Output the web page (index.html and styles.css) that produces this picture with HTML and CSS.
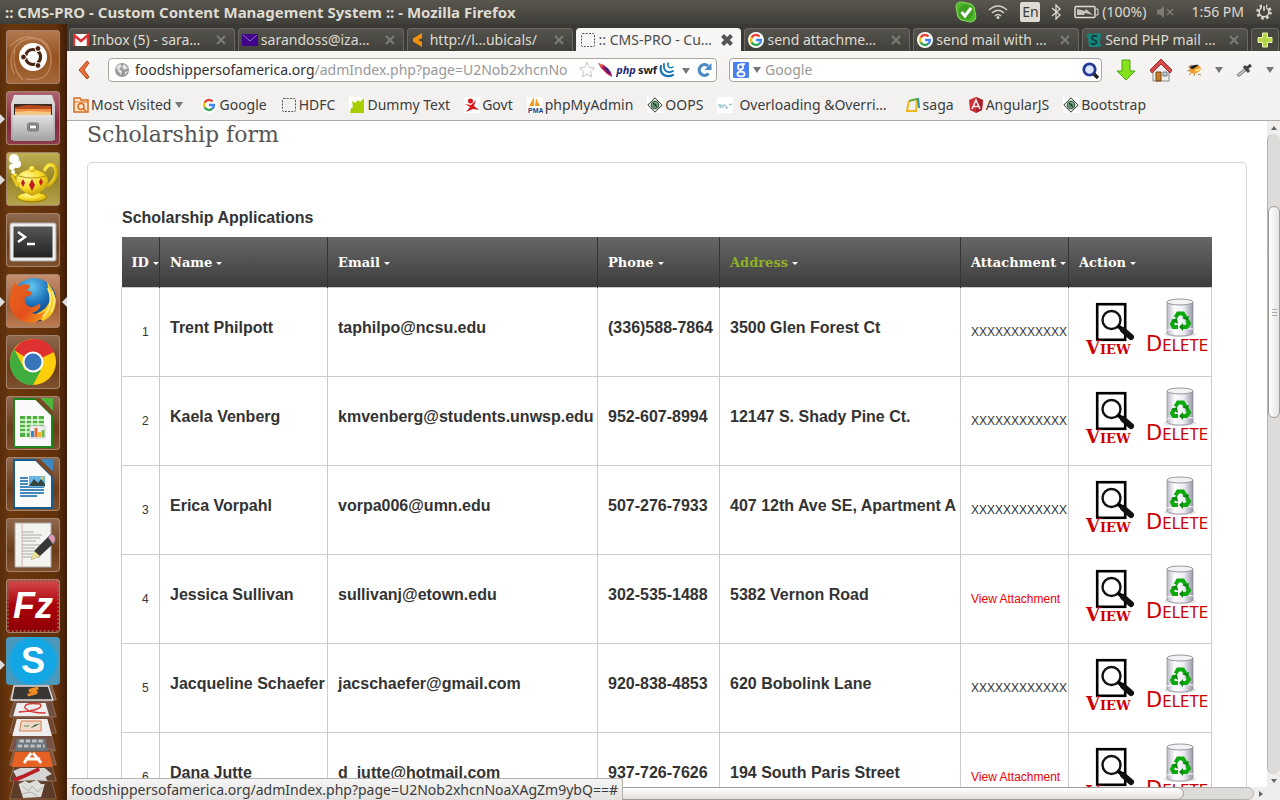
FILE: index.html
```html
<!DOCTYPE html>
<html lang="en">
<head>
<meta charset="utf-8">
<title>:: CMS-PRO - Custom Content Management System ::</title>
<link rel="stylesheet" href="styles.css">
</head>
<body>
<svg class="defs" aria-hidden="true">
  <defs>
    <linearGradient id="glass" x1="0" x2="1" y1="0" y2="0"><stop offset="0" stop-color="#b9b8c6"/><stop offset=".3" stop-color="#fff"/><stop offset=".65" stop-color="#ececf3"/><stop offset="1" stop-color="#9998a8"/></linearGradient>
    <linearGradient id="steel" x1="0" x2="0" y1="0" y2="1"><stop offset="0" stop-color="#e2e2e2"/><stop offset="1" stop-color="#a2a2a2"/></linearGradient>
    <linearGradient id="dark" x1="0" x2="0" y1="0" y2="1"><stop offset="0" stop-color="#565656"/><stop offset="1" stop-color="#222"/></linearGradient>
    <radialGradient id="gold" cx=".4" cy=".3" r=".8"><stop offset="0" stop-color="#fff9a0"/><stop offset=".5" stop-color="#f7dc25"/><stop offset="1" stop-color="#b98b00"/></radialGradient>
    <radialGradient id="globe" cx=".45" cy=".2" r=".8"><stop offset="0" stop-color="#63c5f0"/><stop offset=".5" stop-color="#1b6fb8"/><stop offset="1" stop-color="#0b2a66"/></radialGradient>
    <linearGradient id="fox" x1="0" x2="1" y1="0" y2="1"><stop offset="0" stop-color="#e8641b"/><stop offset=".6" stop-color="#e4501c"/><stop offset="1" stop-color="#f9a11b"/></linearGradient>
  </defs>
  <symbol id="i-google" viewBox="0 0 16 16"><circle cx="8" cy="8" r="8" fill="#fff"/><g fill="none" stroke-width="2.4"><path d="M3.6 5.6A5 5 0 0 1 11.6 4.5" stroke="#ea4335"/><path d="M3.6 10.4a5 5 0 0 1 0-4.8" stroke="#fbbc05"/><path d="M3.6 10.4A5 5 0 0 0 11.3 11.7" stroke="#34a853"/><path d="M8 8h5a5 5 0 0 1-1.7 3.7" stroke="#4285f4"/></g></symbol>
  <symbol id="i-dashed" viewBox="0 0 16 16"><rect x="1.5" y="1.5" width="13" height="13" rx="1" fill="none" stroke="#555" stroke-dasharray="2 1.25"/></symbol>
  <symbol id="i-x" viewBox="0 0 12 12"><path d="M2 2l8 8M10 2l-8 8" stroke="currentColor" stroke-width="2"/></symbol>
  <symbol id="i-diamond" viewBox="0 0 16 16"><path fill="#fff" d="M0 0h16v16H0z"/><path d="M8 .8L15.2 8 8 15.2.8 8z" fill="#e8f0e8" stroke="#333"/><circle cx="8" cy="8" r="3.6" fill="#8cb395" stroke="#345c40" stroke-width="1.3"/><path d="M6 8h4M8 6v4M6 6l4 4" stroke="#1e3d28"/></symbol>
  <symbol id="i-view" viewBox="0 0 40 40"><rect x="2.2" y="2.2" width="28" height="35.600" fill="#fff" stroke="#000" stroke-width="2.600"/><circle cx="16.500" cy="18" r="9" fill="#fff" stroke="#111" stroke-width="2.400"/><path d="M23 24l5 4" stroke="#000" stroke-width="4"/><path d="M28 28l8 7" stroke="#111" stroke-width="6" stroke-linecap="round"/></symbol>
  <symbol id="i-bin" viewBox="0 0 32 40"><ellipse cx="16" cy="36" rx="16" ry="3" fill="#ccc" opacity=".6"/><path d="M3 4v31c1 4 25 4 26 0V4z" fill="url(#glass)" stroke="#888794" stroke-width=".7"/><ellipse cx="16" cy="4" rx="13" ry="3" fill="#f3f3f7" stroke="#999"/><path d="M3 32q12-3 26-1" fill="none" stroke="#fff"/><g fill="none" stroke="#0ca90c" stroke-width="4"><path d="M11.500 19.500l2.500-4h5l2.500 4"/><path d="M23 22l2 3.500-2.500 3.500h-4.500"/><path d="M14 29h-4.500l-1.500-3 2.500-4"/></g><g fill="#078a0a"><path d="M18 20l7-2-1 5z"/><path d="M19 25v8l-4-4z"/><path d="M7 22l6-2 1 6z"/></g></symbol>
</svg>

<header class="panel">
  <h1 class="panel-title">:: CMS-PRO - Custom Content Management System :: - Mozilla Firefox</h1>
  <div class="indicators">
    <svg width="22" height="22" viewBox="0 0 22 22"><path d="M1 6q0-5 5-5 3 0 5 1 9 0 9 9 3 9-4 10-3 0-5-1-9 0-9-9z" fill="#52b62d" stroke="#83d95f"/><circle cx="11" cy="11" r="7.500" fill="#3e9f20"/><path d="M6.500 11l3.500 4 6-8" fill="none" stroke="#fff" stroke-width="3"/></svg>
    <svg class="wifi" width="20" height="16" viewBox="0 0 20 16"><g fill="none" stroke="#d6d2c8" stroke-width="1.600"><path d="M1 6q9-8 18 0M4 9q6-5.500 12 0M7 12q3-3 6 0"/></g><circle cx="10" cy="13.500" r="1.500" fill="#d6d2c8"/></svg>
    <span class="lang">En</span>
    <svg class="bt" width="10" height="16" viewBox="0 0 10 16"><path d="M1 4l8 7-4 4V1l4 4-8 7" fill="none" stroke="#dfdbd2" stroke-width="1.300"/></svg>
    <svg width="25" height="14" viewBox="0 0 25 14"><rect x="1" y="1.500" width="20" height="11" rx="1" fill="none" stroke="#dfdbd2" stroke-width="1.500"/><path d="M22 4h2v6h-2" fill="none" stroke="#dfdbd2"/><path d="M3 4l8 2 1-2 7 6-8-2-1 2H3z" fill="#c9c5bb"/></svg>
    <span class="battery">(100%)</span>
    <svg class="mute" width="18" height="14" viewBox="0 0 18 14"><path d="M1 4.500h3l4-3.500v12L4 9.500H1z" fill="#7d7a72"/><path d="M11 4l6 6M17 4l-6 6" stroke="#7d7a72" stroke-width="1.500"/></svg>
    <time class="clock">1:56 PM</time>
    <svg width="16" height="16" viewBox="0 0 16 16"><circle cx="8" cy="8" r="6.500" fill="none" stroke="#dfdbd2" stroke-width="2.500" stroke-dasharray="2.500 2.600"/><circle cx="8" cy="8" r="4.800" fill="#48463f" stroke="#dfdbd2" stroke-width="1.500"/><path d="M8 0v7" stroke="#48463f" stroke-width="4"/><path d="M8 2v5" stroke="#dfdbd2" stroke-width="1.600"/></svg>
  </div>
</header>

<div class="desktop">
  <nav class="launcher" aria-label="Launcher">
    <button class="tile dash" aria-label="Dash home"><svg viewBox="0 0 54 54"><g fill="none" stroke="#e2b48b" stroke-width="1.500" opacity=".45"><path d="M4 16Q22-1 39 14q10 12 4 26M8 44Q0 24 14 12q15-8 26 2M17 50q-12-12-8-30M20 49q24 4 25-18 0-18-12-22"/></g><circle cx="27" cy="27" r="14" fill="#fff"/><circle cx="27" cy="27" r="7.500" fill="none" stroke="#4a2410" stroke-width="3.200" stroke-dasharray="13.500 2.200" stroke-dashoffset="-9"/><g fill="#4a2410" stroke="#fff"><circle cx="17.500" cy="27" r="2.900"/><circle cx="32" cy="18.500" r="2.900"/><circle cx="32" cy="35.500" r="2.900"/></g></svg></button>
    <button class="tile files open" aria-label="Files"><svg viewBox="0 0 54 54"><path d="M8 4h38l3 9v36H5V13z" fill="url(#steel)"/><path d="M8 13h38v12H8z" fill="#3a2b20"/><path d="M9 16l12-2 24 1v9H9z" fill="#b64a1d"/><path d="M9 18h36v6H9z" fill="#ee8d43"/><path d="M9 21l14-1 22 1v4H9z" fill="#f6c888"/><path d="M7 24h40v26H7z" fill="url(#steel)"/><rect x="21.500" y="32" width="11" height="8" rx="1.500" fill="#999" stroke="#777"/><rect x="23.500" y="34" width="7" height="4" fill="#fff" stroke="#666"/></svg></button>
    <button class="tile teapot open" aria-label="Teapot"><svg viewBox="0 0 54 54"><path d="M38 19q4-9 10-5 7 9-7 21" fill="none" stroke="url(#gold)" stroke-width="3.500"/><ellipse cx="26" cy="45" rx="15" ry="5" fill="url(#gold)" stroke="#9c7b05"/><path d="M11 22Q7 36 26 44q17-6 16-17-2-8-16-10-10 1-15 8-4-1-5-5z" fill="url(#gold)"/><path d="M13 24q12 4 27 0" stroke="#b79313" fill="none"/><circle cx="26" cy="17" r="3" fill="url(#gold)"/><path d="M6 23l5 10 3-2" fill="none" stroke="#e5c61a" stroke-width="3"/><g fill="#c11b25"><path d="M26 27l3 6-3 6-3-6zM17 27l2 4-2 4-2-4zM35 26l2 4-2 4-2-4z"/></g><g fill="#fff"><circle cx="8" cy="7" r="5"/><circle cx="11" cy="12" r="4"/><circle cx="6" cy="15" r="3"/><circle cx="7" cy="20" r="2"/></g></svg></button>
    <button class="tile" aria-label="Terminal"><svg viewBox="0 0 54 54"><rect x="4" y="10" width="46" height="38" rx="2" fill="#eee" stroke="#aaa"/><rect x="7.500" y="13.500" width="39" height="31" fill="url(#dark)"/><path d="M12 19l7 5-7 5M21 31h8" fill="none" stroke="#fff" stroke-width="2.500"/></svg></button>
    <button class="tile firefox open focus" aria-label="Firefox"><svg viewBox="0 0 54 54"><circle cx="28" cy="26" r="22" fill="url(#globe)"/><path d="M41 7l5 8 4 10q0 16-13 22l-10-6q17-6 17-18-2-7-3-16z" fill="#f8c722"/><path d="M7 12l2-4 3 4q6-3 12-1 0 4-4 5l6 2-2 4-5 1q-2 7 5 10 6 0 10-4 2 7-8 10 7 3 13-2-1 9-12 12Q7 48 4 31q-1-8 3-19z" fill="url(#fox)"/><path d="M42 14q7 16-5 29M46 17q5 12-1 21" fill="none" stroke="#ffe877" stroke-width="2"/></svg></button>
    <button class="tile" aria-label="Chrome"><svg viewBox="0 0 54 54"><circle cx="27" cy="27" r="23" fill="#ffce0b"/><path d="M27 27L8 15Q15 4 27 4q15 0 21 13z" fill="#df3131"/><path d="M8 14Q-1 31 10 43q8 8 17 7l8-15-16 0z" fill="#3fae3e"/><circle cx="27" cy="27" r="10.500" fill="#fff"/><circle cx="27" cy="27" r="8.500" fill="#3975bd"/></svg></button>
    <button class="tile" aria-label="Calc"><svg viewBox="0 0 54 54"><path d="M8 3h22l16 16v32H8z" fill="#fafafa" stroke="#1d831b" stroke-width="2"/><path d="M34 2h13v13z" fill="#4bb53c"/><path d="M29 3l18 17v-5L34 2z" fill="#7b4624"/><path d="M14 20h24v21H14z" fill="#53ad45"/><path d="M14 24h24M14 28h24M14 32h24M14 36h24M20 20v21M26 20v21M32 20v21" stroke="#e4ffdc" stroke-width="1.500"/><path d="M24 30h15v12H24z" fill="#f1f1f1" stroke="#ccc"/><path d="M25 35h3v6h-3z" fill="#3289d2"/><path d="M28.500 32h3v9h-3z" fill="#e46a38"/><path d="M32 36h3v5h-3z" fill="#efb830"/><path d="M35.500 34h3v7h-3z" fill="#73bc52"/></svg></button>
    <button class="tile" aria-label="Writer"><svg viewBox="0 0 54 54"><path d="M8 3h22l16 16v32H8z" fill="#fafafa" stroke="#175c91" stroke-width="2"/><path d="M34 2h13v13z" fill="#3d88c0"/><path d="M29 3l18 17v-5L34 2z" fill="#7b4624"/><path d="M14 21h8M14 24h8M14 27h8M14 30h24M14 33h24M14 36h24M14 39h17" stroke="#4389be" stroke-width="2"/><path d="M23 19h16v11H23z" fill="#6ab6e5"/><path d="M23 29l5-7 4 4 3-4 4 5v2z" fill="#34463e"/><circle cx="36" cy="21" r="1.500" fill="#f5d440"/></svg></button>
    <button class="tile" aria-label="Text editor"><svg viewBox="0 0 54 54"><path d="M9 5h36v44H9z" fill="#f3f3f0" stroke="#aaa"/><path d="M16 5v44" stroke="#eaa"/><path d="M16 14h12M16 17h20M16 20h18M16 23h14M16 27h20M16 30h13M16 33h17M16 36h12M16 39h18" stroke="#aaa"/><path d="M25 42l4-10L42 19l6 6-14 13z" fill="#363636"/><path d="M25 42l3-9 6 5z" fill="#eee191"/><path d="M42 19l3-3q5 1 4 7l-2 3z" fill="#e698b9" stroke="#777"/></svg></button>
    <button class="tile filezilla" aria-label="FileZilla"><span>Fz</span></button>
    <button class="skype open" aria-label="Skype"><span>S</span></button>
    <button class="folded" aria-label="More applications"><svg viewBox="0 0 60 115" preserveAspectRatio="none"><g stroke="#a88774" stroke-opacity=".6"><path d="M9 0h42l5 15H4z" fill="#84604b"/><path d="M9 16h42l5 16H4z" fill="#705040"/><path d="M9 32h42l5 16H4z" fill="#70462f"/><path d="M10 48h40l5 18H4z" fill="#755246"/><path d="M9 64h42l5 16H4z" fill="#80573e"/><path d="M9 80h42l5 16H4z" fill="#63422f"/><path d="M9 96h42l5 18H4z" fill="#5c3b28"/></g><path d="M9 1h38l5 14H6z" fill="#393735" stroke="#ddd" stroke-width="1.500"/><path d="M36 3l-9 2q-2 2 5 1 6 2-8 4" fill="none" stroke="#f08b22" stroke-width="3"/><path d="M12 18h32l4 13H8z" fill="#eee"/><path d="M14 27q29-2 24-8-18-2-17 4 5 5 23 5" fill="none" stroke="#d53a3c" stroke-width="1.500"/><path d="M12 34h34l5 17H7z" fill="#eee"/><path d="M17 36h22v10H15z" fill="#efd9cd" stroke="#dc7540"/><path d="M20 41h6M28 43l4-3 5-1" stroke="#4b9a48"/><path d="M12 54h32l2 12H10z" fill="#6e7479"/><path d="M15 56h26M13 61h30" stroke="#bbc0c4" stroke-width="3" stroke-dasharray="5 2"/><path d="M10 67h38l4 15H6z" fill="#e66224"/><path d="M28 68l-8 10M30 68l9 10M21 74h17" stroke="#fff" stroke-width="3"/><path d="M8 86l8-3h27l8 6-7 3 2 4-14-1-18 1z" fill="#d5d5d5"/><path d="M9 95l9-3 19-8" stroke="#b91f24" stroke-width="4" fill="none"/><path d="M14 99l7-3 5 2 8-3 5 4 4 0-4 13-20 1z" fill="#dededb"/><path d="M18 101l7 5 4-5 6 6 6-5M18 109l9-2 8 4" fill="none" stroke="#aaa"/></svg></button>
  </nav>

  <div class="browser">
    <div class="tabs">
      <a class="tab" href="#"><svg class="fav" viewBox="0 0 16 16"><path fill="#fff" d="M0 2h16v12H0z"/><path d="M1 14V3l7 6 7-6v11" fill="none" stroke="#d83434" stroke-width="2.500"/></svg><span>Inbox (5) - sara…</span><svg class="close"><use href="#i-x"/></svg></a>
      <a class="tab" href="#"><svg class="fav" viewBox="0 0 16 16"><path fill="#40008c" d="M0 2h16v12H0z"/><path d="M1 3l7 6 7-6" fill="none" stroke="#9673bd"/></svg><span>sarandoss@iza…</span><svg class="close"><use href="#i-x"/></svg></a>
      <a class="tab" href="#"><svg class="fav" viewBox="0 0 16 16"><path d="M11 1v5L7 8l4 2v5L2 9.500v-3z" fill="#f0920c"/></svg><span>http://l…ubicals/</span><svg class="close"><use href="#i-x"/></svg></a>
      <a class="tab active" href="#" aria-current="page"><svg class="fav"><use href="#i-dashed"/></svg><span>:: CMS-PRO - Cu…</span><svg class="close" viewBox="0 0 12 12"><path d="M1.500 1.500l9 9M10.500 1.500l-9 9" stroke="currentColor" stroke-width="4"/></svg></a>
      <a class="tab" href="#"><svg class="fav"><use href="#i-google"/></svg><span>send attachme…</span><svg class="close"><use href="#i-x"/></svg></a>
      <a class="tab" href="#"><svg class="fav"><use href="#i-google"/></svg><span>send mail with …</span><svg class="close"><use href="#i-x"/></svg></a>
      <a class="tab" href="#"><svg class="fav" viewBox="0 0 16 16"><path d="M0 3l3-2 1 1 11-1-1 11 2 2-3 1-10 0-1-9z" fill="#17857f"/><path d="M11 4H7Q4 6 8 8q5 2 1 4H5" fill="none" stroke="#103f3d" stroke-width="1.800"/></svg><span>Send PHP mail …</span><svg class="close"><use href="#i-x"/></svg></a>
      <button class="new-tab" aria-label="New tab"><svg width="16" height="16" viewBox="0 0 16 16"><path d="M5.500 1h5v4.500H15v5h-4.500V15h-5v-4.500H1v-5h4.500z" fill="#b5d64a" stroke="#e7f5ad"/></svg></button>
    </div>

    <div class="toolbar">
      <button class="icon back" aria-label="Back"><svg width="12" height="20" viewBox="0 0 12 20"><path d="M9 1L1 10l8 9 2-2-5-7 5-7z" fill="#e9703c" stroke="#b54417"/></svg></button>
      <div class="field address">
        <svg width="16" height="16" viewBox="0 0 16 16"><circle cx="8" cy="8" r="7" fill="#999"/><path d="M2 5l4-3 2 2-3 3 3 2-1 4-3-4zM10 2l4 4-4 2-2-3zM11 10l3-1-3 4z" fill="#e3e3e3"/></svg>
        <a class="url" href="#">foodshippersofamerica.org<span>/admIndex.php?page=U2Nob2xhcnNo</span></a>
        <svg width="18" height="18" viewBox="0 0 18 18"><path d="M9 1.500l2.300 5 5.200.5-4 3.500 1.200 5.500L9 13.200 4.300 16l1.200-5.500-4-3.500 5.200-.5z" fill="#fff" stroke="#c4c4c4"/></svg>
        <svg width="16" height="16" viewBox="0 0 16 16"><path d="M0 1l6 2 7 7 1 5-5-3-6-6z" fill="#cb1554"/><path d="M4 4l6 2 4 8-5-4z" fill="#50207c"/><path d="M0 1l4 2 1 3z" fill="#e6a01a"/></svg>
        <b class="php">php</b><b class="swf">swf</b>
        <svg width="16" height="16" viewBox="0 0 16 16"><g fill="none" stroke="#1675b7" stroke-linecap="round"><path d="M2 4c-2 9 6 12 12 9" stroke-width="2.200"/><path d="M5 2c-1 7 4 10 9 7" stroke-width="1.800"/><path d="M9 1c-1 4 2 6 5 4" stroke-width="1.500"/></g></svg>
        <i class="caret"></i>
        <svg class="reload" width="16" height="16" viewBox="0 0 16 16"><path d="M12.500 11.500A5.300 5.300 0 1 1 12 4" fill="none" stroke="#4b8bc4" stroke-width="3.200"/><path d="M15.500 1v7H8.500z" fill="#4b8bc4"/></svg>
      </div>
      <div class="field search">
        <svg width="16" height="16" viewBox="0 0 16 16"><rect width="16" height="16" rx="1" fill="#4a7ff0"/><g fill="none" stroke="#fff" stroke-width="1.700"><circle cx="7.500" cy="5" r="2.600"/><ellipse cx="8" cy="12" rx="3.600" ry="2.400"/><path d="M9 7q-4 1 0 3M8 2.200h4"/></g></svg>
        <i class="caret"></i>
        <input type="text" placeholder="Google" aria-label="Search with Google">
        <svg width="17" height="17" viewBox="0 0 17 17"><circle cx="7.500" cy="7.500" r="5.700" fill="#dce7fb" stroke="#253a93" stroke-width="2.800"/><path d="M12 12l4 4" stroke="#222" stroke-width="3.500"/></svg>
      </div>
      <div class="tools">
        <button class="icon" aria-label="Downloads"><svg width="20" height="24" viewBox="0 0 20 24"><path d="M6 2h8v11h5l-9 9-9-9h5z" fill="#86e31b" stroke="#4aa313"/></svg></button>
        <button class="icon" aria-label="Home"><svg width="24" height="24" viewBox="0 0 24 24"><path d="M4 11l8-8 8 8v12H4z" fill="#eee" stroke="#888"/><path d="M12 1L1 12l2 3 9-9 9 9 2-3z" fill="#d64a4a" stroke="#9d2f2f"/><path d="M7 14h5v9H7z" fill="#c87c24" stroke="#754513"/><path d="M14 14h4v4h-4z" fill="#b8cddd" stroke="#777"/></svg></button>
        <button class="icon" aria-label="Firebug"><svg width="16" height="16" viewBox="0 0 16 16"><path d="M2 5l4-2M1 9l4-1M3 13l3-3M12 12l3 1M8 14l1-3" stroke="#b0884a"/><ellipse cx="9" cy="7.500" rx="6" ry="3.700" transform="rotate(-18 9 7.500)" fill="#ee9a2b"/><path d="M3 6q4-4 10-3L7 7z" fill="#222"/><path d="M9 9l5-2" stroke="#ffde6c" stroke-width="2"/></svg></button>
        <i class="caret"></i>
        <button class="icon" aria-label="Color picker"><svg width="17" height="16" viewBox="0 0 17 16"><path d="M1.500 14L10 7" stroke="#888" stroke-width="3.500"/><path d="M2 13.500l8-6.500" stroke="#eee"/><path d="M8 4l5 6M11 6l4-3" stroke="#444" stroke-width="3"/></svg></button>
        <i class="caret"></i>
      </div>
    </div>

    <nav class="bookmarks" aria-label="Bookmarks">
      <a class="most" href="#"><svg viewBox="0 0 16 16"><path d="M1 3V1h6l1 2h7v12H1z" fill="#ffe8cf" stroke="#d86a20" stroke-width="1.500"/><path d="M1 5h14" stroke="#d86a20"/><circle cx="8" cy="9.500" r="3" fill="none" stroke="#d86a20" stroke-width="1.500"/><path d="M10 11l3 3" stroke="#d86a20" stroke-width="1.500"/></svg>Most Visited<i class="caret"></i></a>
      <a href="#"><svg><use href="#i-google"/></svg>Google</a>
      <a href="#"><svg><use href="#i-dashed"/></svg>HDFC</a>
      <a href="#"><svg viewBox="0 0 16 16"><path fill="#fff" d="M0 0h16v16H0z"/><path d="M1 16l1-5 2-1-1-6 3 2 3-3 2 2 4-4v15z" fill="#a6ce00"/></svg>Dummy Text</a>
      <a href="#"><svg viewBox="0 0 16 16"><path fill="#fff" d="M0 0h16v16H0z"/><circle cx="6.500" cy="4" r="2.500" fill="#d71920"/><path d="M1 7l6 1 5-5-2 6 5 4-6-1-7 3 4-5z" fill="#d71920"/></svg>Govt</a>
      <a href="#"><svg viewBox="0 0 16 16"><path fill="#fff" d="M0 0h16v16H0z"/><path d="M7 0v9H2zM9 1l4 8H8z" fill="#f59a16"/><text x="1" y="15.500" class="pma">PMA</text></svg>phpMyAdmin</a>
      <a href="#"><svg><use href="#i-diamond"/></svg>OOPS</a>
      <a class="overloading" href="#"><svg viewBox="0 0 16 16"><path fill="#fff" d="M0 0h16v16H0z"/><path d="M1 8h2v3M4 7v4M6 11V8h2M9 8v3h2M12 8l3-1" fill="none" stroke="#73b5c6"/></svg>Overloading &amp;Overri…</a>
      <a href="#"><svg viewBox="0 0 16 16"><path d="M4 4L2 14h9l1-11" fill="none" stroke="#efb51a" stroke-width="2"/><path d="M4 4l8-2" stroke="#60aa37" stroke-width="2"/><path d="M13 1l1 10" stroke="#278dac" stroke-width="2"/></svg>saga</a>
      <a href="#"><svg viewBox="0 0 16 16"><path d="M8 0l7 3-1 10-6 3-6-3L1 3z" fill="#d12f36"/><path d="M8 0v16l6-3 1-10z" fill="#a7222a"/><path d="M4 12l4-9 4 9M5.500 9.500h5" fill="none" stroke="#eee" stroke-width="1.600"/></svg>AngularJS</a>
      <a href="#"><svg><use href="#i-diamond"/></svg>Bootstrap</a>
    </nav>

    <div class="viewport">
      <main class="page">
        <h2 class="page-title">Scholarship form</h2>
        <section class="card">
          <h3 class="card-title">Scholarship Applications</h3>
          <table class="grid">
            <colgroup><col class="c-id"><col class="c-name"><col class="c-email"><col class="c-phone"><col class="c-address"><col class="c-file"><col class="c-action"></colgroup>
            <thead><tr><th>ID</th><th>Name</th><th>Email</th><th>Phone</th><th class="hover">Address</th><th>Attachment</th><th>Action</th></tr></thead>
            <tbody>
              <tr><td>1</td><td><b>Trent Philpott</b></td><td><b>taphilpo@ncsu.edu</b></td><td><b>(336)588-7864</b></td><td><b>3500 Glen Forest Ct</b></td><td>XXXXXXXXXXXX</td><td><div class="actions"><button class="view"><svg><use href="#i-view"/></svg>View</button><button class="delete"><svg><use href="#i-bin"/></svg>Delete</button></div></td></tr>
              <tr><td>2</td><td><b>Kaela Venberg</b></td><td><b>kmvenberg@students.unwsp.edu</b></td><td><b>952-607-8994</b></td><td><b>12147 S. Shady Pine Ct.</b></td><td>XXXXXXXXXXXX</td><td><div class="actions"><button class="view"><svg><use href="#i-view"/></svg>View</button><button class="delete"><svg><use href="#i-bin"/></svg>Delete</button></div></td></tr>
              <tr><td>3</td><td><b>Erica Vorpahl</b></td><td><b>vorpa006@umn.edu</b></td><td><b>507-276-7933</b></td><td><b>407 12th Ave SE, Apartment A</b></td><td>XXXXXXXXXXXX</td><td><div class="actions"><button class="view"><svg><use href="#i-view"/></svg>View</button><button class="delete"><svg><use href="#i-bin"/></svg>Delete</button></div></td></tr>
              <tr><td>4</td><td><b>Jessica Sullivan</b></td><td><b>sullivanj@etown.edu</b></td><td><b>302-535-1488</b></td><td><b>5382 Vernon Road</b></td><td><a href="#">View Attachment</a></td><td><div class="actions"><button class="view"><svg><use href="#i-view"/></svg>View</button><button class="delete"><svg><use href="#i-bin"/></svg>Delete</button></div></td></tr>
              <tr><td>5</td><td><b>Jacqueline Schaefer</b></td><td><b>jacschaefer@gmail.com</b></td><td><b>920-838-4853</b></td><td><b>620 Bobolink Lane</b></td><td>XXXXXXXXXXXX</td><td><div class="actions"><button class="view"><svg><use href="#i-view"/></svg>View</button><button class="delete"><svg><use href="#i-bin"/></svg>Delete</button></div></td></tr>
              <tr><td>6</td><td><b>Dana Jutte</b></td><td><b>d_jutte@hotmail.com</b></td><td><b>937-726-7626</b></td><td><b>194 South Paris Street</b></td><td><a href="#">View Attachment</a></td><td><div class="actions"><button class="view"><svg><use href="#i-view"/></svg>View</button><button class="delete"><svg><use href="#i-bin"/></svg>Delete</button></div></td></tr>
            </tbody>
          </table>
        </section>
      </main>
      <div class="vbar"><i class="arrow up"></i><div class="track"><div class="thumb"></div></div><i class="arrow down"></i></div>
    </div>
    <div class="hbar"><div class="track"><div class="thumb"></div></div><i class="arrow right"></i></div>
    <div class="status">foodshippersofamerica.org/admIndex.php?page=U2Nob2xhcnNoaXAgZm9ybQ==#</div>
  </div>
</div>
</body>
</html>
```
FILE: styles.css
```css
* { box-sizing: border-box; }
body {
  margin: 0;
  height: 100vh;
  display: flex;
  flex-direction: column;
  overflow: hidden;
  font: 14px/20px "Noto Sans", "Open Sans", sans-serif;
  color: #3c3c3c;
  background: #f2f1f0;
}
button { font: inherit; color: inherit; background: none; border: 0; padding: 0; margin: 0; cursor: pointer; }
a { color: inherit; text-decoration: none; }
svg { flex: none; display: block; }
.defs { position: absolute; width: 0; height: 0; }
.caret { flex: none; border: 4px solid transparent; border-top: 6px solid #777; border-bottom: 0; }

/* Top panel */
.panel {
  flex: none;
  height: 24px;
  padding: 0 8px 0 5px;
  display: flex;
  align-items: center;
  justify-content: space-between;
  background: linear-gradient(#59564e, #3f3e39);
  color: #dfdbd2;
}
.panel-title { margin: 0; font-size: 15px; line-height: 20px; font-weight: 700; white-space: nowrap; }
.indicators { display: flex; align-items: center; white-space: nowrap; }
.wifi { margin: 0 12px 0 11px; }
.lang { width: 20px; height: 20px; background: #dfdbd2; color: #3c3b37; border-radius: 2px; text-align: center; }
.bt { margin: 0 13px 0 11px; }
.battery { margin: 0 10px 0 3px; }
.clock { margin: 0 12px 0 17px; }

.desktop { flex: 1; min-height: 0; display: flex; }

/* Launcher */
.launcher {
  flex: none;
  width: 67px;
  padding: 6px 6px 0;
  display: flex;
  flex-direction: column;
  gap: 7px;
  overflow: hidden;
  background: linear-gradient(90deg, #5a2d0b, #6b370d 15%, #60300b 85%, #3e1c07);
}
.tile {
  flex: none;
  position: relative;
  width: 54px;
  height: 54px;
  border-radius: 4px;
  background: linear-gradient(#8f6a50, #6b3c18 60%, #7f5230);
  box-shadow: inset 0 0 0 1px #a5836b;
}
.tile svg { width: 54px; height: 54px; }
.dash { background: linear-gradient(#b37a52, #96531f 50%, #a4683c); }
.files { background: linear-gradient(#b06673, #84283f 60%, #8e3b4e); }
.teapot { background: linear-gradient(#c1b257, #978426 50%, #b5a54f); }
.firefox { background: linear-gradient(#c59273, #a55c30 60%, #bb7d55); }
.filezilla { background: linear-gradient(#d84f50, #a80008 50%, #8d0006); outline: 2px dotted #8b5b43; outline-offset: -3px; }
.filezilla span { color: #fff; font: italic 700 36px/48px "Liberation Sans", Arial, sans-serif; }
.open::before, .focus::after { content: ""; position: absolute; top: 23px; border: 5px solid transparent; }
.open::before { left: -6px; border-left-color: #ddd; border-right: 0; }
.focus::after { right: -7px; border-right-color: #ddd; border-left: 0; }
.skype {
  flex: none;
  position: relative;
  width: 54px;
  height: 48px;
  margin-top: -3px;
  border-radius: 4px;
  background: radial-gradient(circle, #12a6e4 60%, #4a99bd 72%);
  color: #fff;
  font: 700 36px/48px "Liberation Sans", Arial, sans-serif;
}
.folded { flex: none; width: 54px; height: 115px; margin-top: -7px; }
.folded svg { width: 54px; height: 115px; }

/* Browser chrome */
.browser { flex: 1; min-width: 0; position: relative; display: flex; flex-direction: column; }
.tabs { flex: none; height: 27px; padding: 4px 1px 0 2px; display: flex; gap: 3px; background: #3a3935; color: #dfdbd2; }
.tab {
  flex: 1;
  min-width: 0;
  display: flex;
  align-items: center;
  gap: 3px;
  padding: 0 7px 0 3px;
  border: 1px solid #6a6861;
  border-bottom: 0;
  border-radius: 4px 4px 0 0;
  background: linear-gradient(#55534c, #403f3a);
}
.tab span { flex: 1; overflow: hidden; white-space: nowrap; }
.fav { width: 16px; height: 16px; }
.close { width: 12px; height: 12px; color: #7d7b74; }
.active { background: #f7f6f5; border-color: #f7f6f5; color: #4c4c4c; }
.active .close { color: #555; }
.new-tab { width: 28px; display: flex; align-items: center; justify-content: center; border: 1px solid #6a6861; border-bottom: 0; border-radius: 4px 4px 0 0; background: #484740; }

.toolbar { flex: none; height: 38px; padding: 0 6px 0 11px; display: flex; align-items: center; background: linear-gradient(#f7f6f5, #f2f1f0); }
.back { margin-right: 18px; }
.field { height: 24px; display: flex; align-items: center; background: #fff; border: 1px solid #a8a49e; border-radius: 4px; white-space: nowrap; }
.address { flex: 608; min-width: 0; padding: 0 4px 0 5px; gap: 2px; }
.url { flex: 1; min-width: 0; overflow: hidden; padding-left: 3px; color: #333; }
.url span { color: #999; }
.php { color: #252a78; font: italic 700 11px/16px "Noto Sans", sans-serif; }
.swf { color: #222; font: 700 11px/16px "Noto Sans", sans-serif; }
.address .caret { margin: 2px 4px 0 5px; }
.search { flex: 372; min-width: 0; margin-left: 12px; padding: 0 2px 0 3px; gap: 4px; }
.search input { flex: 1; min-width: 0; border: 0; outline: 0; padding: 0; font: inherit; background: none; color: #333; }
.search input::placeholder { color: #999; opacity: 1; }
.tools { display: flex; align-items: center; gap: 13px; margin-left: 14px; }
.icon { flex: none; }

.bookmarks { flex: none; height: 32px; padding: 0 6px; display: flex; align-items: center; gap: 14px; background: #f2f1f0; border-bottom: 1px solid #b3aca6; white-space: nowrap; overflow: hidden; }
.bookmarks a { display: flex; align-items: center; gap: 2px; }
.bookmarks svg { width: 16px; height: 16px; }
.bookmarks .caret { margin-left: 2px; }
.most { margin-right: 4px; }
.bookmarks .overloading { gap: 6px; margin-right: 4px; }
.pma { font: 700 7px "Liberation Sans", Arial, sans-serif; fill: #2b3a78; }

/* Page */
.viewport { flex: 1; min-height: 0; display: flex; background: #fff; }
.page { flex: 1; min-width: 0; padding: 0 20px; overflow: hidden; }
.page-title { margin: 0 0 13px; font: 400 22px/28px "DejaVu Serif", serif; color: #555; }
.card { padding: 44px 35px 44px 33px; border: 1px solid #d6d6d6; border-radius: 5px; font: 12px/18px "Liberation Sans", Arial, sans-serif; color: #333; }
.card-title { margin: 0 0 8px; padding-left: 1px; font-size: 16px; line-height: 22px; }
.grid { width: 100%; table-layout: fixed; border-collapse: collapse; white-space: nowrap; }
.c-id { width: 38px; }
.c-name { width: 168px; }
.c-email { width: 270px; }
.c-phone { width: 122px; }
.c-address { width: 241px; }
.c-file { width: 108px; }
.c-action { width: 143px; }
.grid thead { background: linear-gradient(#676767, #3c3c3c); }
.grid th { height: 50px; padding: 2px 0 0 10px; text-align: left; color: #fff; font: 700 13px/18px "DejaVu Serif", serif; border-right: 1px solid #333; }
.grid th:last-child { border-right: 0; }
.grid th::after { content: ""; display: inline-block; margin-left: 4px; border: 3px solid transparent; border-top-color: #fff; border-bottom: 0; vertical-align: middle; }
.grid .hover { color: #8fb026; }
.grid td { height: 89px; padding: 0 0 0 10px; border: 1px solid #ccc; }
.grid td:first-child { padding-left: 20px; }
.grid b { display: block; padding-bottom: 8px; font-size: 16px; }
.grid td a { color: #e00; }
.actions { display: flex; align-items: flex-start; gap: 10px; padding: 0 0 12px 7px; color: #c00; }
.actions button { display: flex; flex-direction: column; align-items: flex-start; }
.view { margin-top: 4px; width: 50px; }
.actions .view { font: small-caps 700 18px/12px "DejaVu Serif", serif; }
.view svg { width: 40px; height: 40px; margin-left: 9px; }
.delete { width: 61px; }
.actions .delete { font: small-caps 400 21px/12px "DejaVu Sans", sans-serif; }
.delete svg { width: 32px; height: 40px; margin-left: 18px; }

/* Scrollbars */
.track { flex: 1; background: #dedcda; border: 1px solid #b4b0ac; border-radius: 7px; }
.thumb { border: 1px solid #a09c98; border-radius: 7px; background: #f1f0ef; }
.vbar { flex: none; width: 13px; display: flex; flex-direction: column; align-items: stretch; background: #efeeed; }
.vbar .track { display: grid; grid-template-rows: 72fr 212fr 356fr; border-width: 0 0 0 1px; }
.vbar .thumb { grid-row: 2; background: linear-gradient(90deg, #fff, #e6e4e2); display: grid; place-items: center; }
.vbar .thumb::after { content: ""; width: 5px; height: 7px; background: repeating-linear-gradient(#aaa 0 1px, transparent 1px 3px); }
.hbar { flex: none; height: 13px; padding-right: 13px; display: flex; background: #efeeed; }
.hbar .track { display: grid; grid-template-columns: 1117fr 69fr; }
.hbar .thumb { margin: -1px 0; background: linear-gradient(#fff, #e2e0de); }
.arrow { flex: none; width: 13px; height: 13px; display: grid; place-items: center; }
.arrow::after { content: ""; border: 3px solid transparent; }
.up::after { border-bottom: 4px solid #666; border-top: 0; }
.down::after { border-top: 4px solid #666; border-bottom: 0; }
.right::after { border-left: 4px solid #666; border-right: 0; }
.status { position: absolute; left: 0; bottom: 0; padding: 0 4px; height: 22px; line-height: 21px; white-space: nowrap; background: linear-gradient(#f5f5f5, #e4e3e1); border: 1px solid #b5b1ad; border-width: 1px 1px 0 0; border-radius: 0 3px 0 0; }
```
